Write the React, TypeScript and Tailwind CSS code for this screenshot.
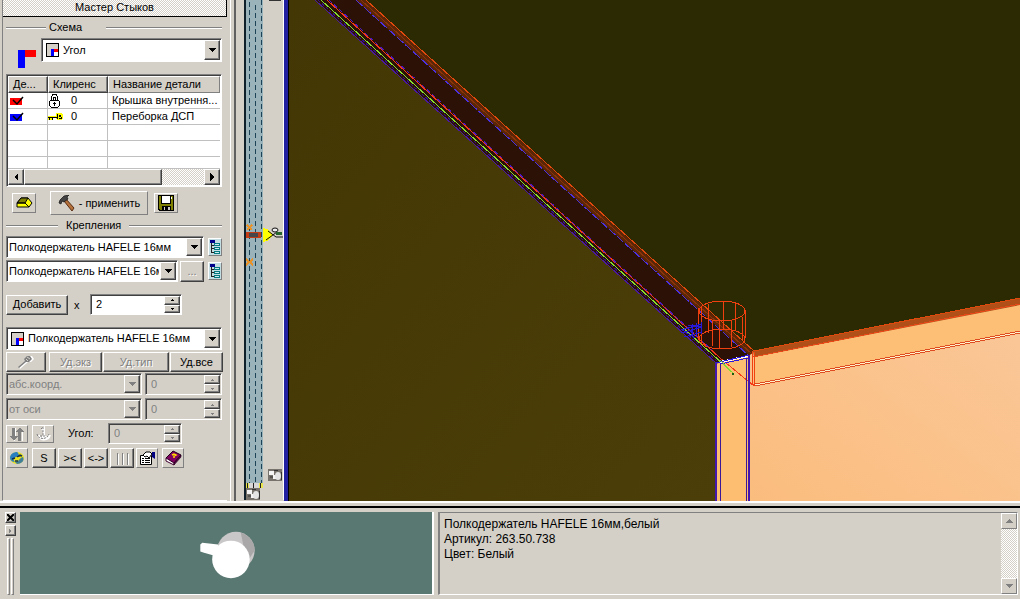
import { useState } from "react"
import type { ReactNode } from "react"
import clsx from "clsx"

const RAISED =
  "border border-t-white border-l-white border-r-[#404040] border-b-[#404040] shadow-[inset_-1px_-1px_#808080]"
const FLAT =
  "border border-t-white border-l-white border-r-[#808080] border-b-[#808080]"
const SUNKEN =
  "border border-t-[#808080] border-l-[#808080] border-r-white border-b-white shadow-[inset_1px_1px_#404040]"
const DITHER =
  "bg-[repeating-conic-gradient(#ffffff_0_25%,#d4d0c8_0_50%)] bg-[length:2px_2px]"

type ButtonProps = {
  label?: string
  children?: ReactNode
  className?: string
  flat?: boolean
  disabled?: boolean
}

function Button({ label, children, className, flat, disabled }: ButtonProps) {
  return (
    <button
      type="button"
      aria-label={label}
      disabled={disabled}
      className={clsx(
        "flex shrink-0 items-center justify-center bg-[#d4d0c8]",
        flat ? FLAT : RAISED,
        disabled && "text-[#808080] [text-shadow:1px_1px_#fff]",
        className
      )}
    >
      {children}
    </button>
  )
}

function Triangle({ dir, small, muted }: { dir: "up" | "down" | "left" | "right"; small?: boolean; muted?: boolean }) {
  const points = {
    up: "0,6 4,2 8,6",
    down: "0,2 8,2 4,6",
    left: "6,0 6,8 2,4",
    right: "2,0 2,8 6,4",
  }
  return (
    <svg
      viewBox="0 0 8 8"
      className={clsx("shrink-0", small ? "size-1" : "size-2", muted ? "fill-[#808080]" : "fill-black")}
      shapeRendering="crispEdges"
      aria-hidden="true"
    >
      <polygon points={points[dir]} />
    </svg>
  )
}

type ComboProps = {
  label: string
  options: string[]
  className?: string
  icon?: boolean
  disabled?: boolean
}

function Combo({ label, options, className, icon, disabled }: ComboProps) {
  return (
    <div
      className={clsx(
        "relative flex min-w-0 items-center p-0.5",
        SUNKEN,
        disabled ? "bg-[#d4d0c8]" : "bg-white",
        className
      )}
    >
      {icon && (
        <span className="ml-0.5 flex shrink-0">
          <CornerIcon />
        </span>
      )}
      <select
        aria-label={label}
        disabled={disabled}
        className={clsx(
          "mr-4 h-full w-0 min-w-0 flex-1 appearance-none overflow-hidden bg-transparent text-clip outline-none",
          icon ? "pl-1" : "pl-0",
          disabled && "text-[#808080]"
        )}
      >
        {options.map((option) => (
          <option key={option}>{option}</option>
        ))}
      </select>
      <span
        className={clsx(
          "pointer-events-none absolute inset-y-px right-px flex w-4 items-center justify-center bg-[#d4d0c8]",
          RAISED
        )}
      >
        <Triangle dir="down" muted={disabled} />
      </span>
    </div>
  )
}

type SpinnerProps = {
  label: string
  initial: number
  className?: string
  disabled?: boolean
}

function Spinner({ label, initial, className, disabled }: SpinnerProps) {
  const [value, setValue] = useState(initial)

  return (
    <div
      className={clsx("flex min-w-0 p-px", SUNKEN, disabled ? "bg-[#d4d0c8]" : "bg-white", className)}
    >
      <input
        type="text"
        aria-label={label}
        value={value}
        disabled={disabled}
        onChange={(event) => setValue(Number(event.target.value) || 0)}
        className={clsx("w-0 min-w-0 flex-1 bg-transparent pl-1 outline-none", disabled && "text-[#808080]")}
      />
      <span className="flex w-4 shrink-0 flex-col">
        <button
          type="button"
          aria-label={`${label}: больше`}
          disabled={disabled}
          onClick={() => setValue(value + 1)}
          className={clsx("flex flex-1 items-center justify-center bg-[#d4d0c8]", RAISED)}
        >
          <Triangle dir="up" small muted={disabled} />
        </button>
        <button
          type="button"
          aria-label={`${label}: меньше`}
          disabled={disabled}
          onClick={() => setValue(value - 1)}
          className={clsx("flex flex-1 items-center justify-center bg-[#d4d0c8]", RAISED)}
        >
          <Triangle dir="down" small muted={disabled} />
        </button>
      </span>
    </div>
  )
}

function Legend({ children, before, text }: { children: ReactNode; before: string; text: string }) {
  return (
    <h2 className="flex items-center">
      <span className={clsx("h-0.5 border-t border-t-[#808080] bg-white", before)} />
      <span className={text}>{children}</span>
      <span className="h-0.5 flex-1 border-t border-t-[#808080] bg-white" />
    </h2>
  )
}

function CornerIcon() {
  return (
    <svg width="13" height="14" shapeRendering="crispEdges" aria-hidden="true">
      <path d="M0 0h13v14H0z" />
      <path d="M1 1h11v12H1z" fill="#d4d0c8" />
      <path d="M5 6h3v7H5z" fill="#00f" />
      <path d="M8 6h4v3H8z" fill="#f00" />
      <path d="M8 9h4v4H8z" fill="#fff" />
    </svg>
  )
}

function FlagIcon({ color }: { color: string }) {
  return (
    <svg width="14" height="12" aria-hidden="true">
      <rect x="0" y="3" width="12" height="7" fill={color} shapeRendering="crispEdges" />
      <path d="M3 5l4 4l6-7" fill="none" stroke="#000" strokeWidth="1.500" />
    </svg>
  )
}

function LockIcon() {
  return (
    <svg width="13" height="14" shapeRendering="crispEdges" aria-hidden="true">
      <path d="M3.500 6V3L5 .5h3L9.500 3v3" fill="none" stroke="#000" />
      <path d="M5.500 6V3.500h2V6" fill="none" stroke="#000" />
      <path d="M2.500 6.500h8l1 1v4l-2 2h-6l-2-2v-4z" fill="#fff" stroke="#000" />
      <path d="M6 8h1v4H6zM5 9h3v1H5z" />
    </svg>
  )
}

function KeyIcon() {
  return (
    <svg width="15" height="10" shapeRendering="crispEdges" aria-hidden="true">
      <path d="M0 4h8V1h5l2 2v3l-2 2H9L7 6H5v2H0z" fill="#ff0" />
      <path d="M0 5h9v1H0zM1 6h1v2H1zM4 6h1v2H4zM9 2h1v5H9zM11 3h2v2h-2zM13 5h1v2h-3v-1h2z" />
    </svg>
  )
}

function EraserIcon() {
  return (
    <svg width="17" height="12" stroke="#000" aria-hidden="true">
      <path d="M1 6L5 1h7l4 5-3 4H1z" fill="#ff0" />
      <path d="M1 6L5 1h7L9 6z" fill="#808000" />
      <path d="M9 6l4 4M9 6H1" fill="none" />
    </svg>
  )
}

function HammerIcon() {
  return (
    <svg width="17" height="17" aria-hidden="true">
      <path d="M6 6l2-2 8 9-2 3z" fill="#b5713c" stroke="#5a2d12" />
      <path d="M1 8l1-3 4-4 5-1-2 2 1 2-4 3-2-1-1 3z" fill="#444" stroke="#111" strokeWidth=".7" />
    </svg>
  )
}

function SaveIcon() {
  return (
    <svg width="16" height="16" shapeRendering="crispEdges" aria-hidden="true">
      <path d="M0 0h16v16H1l-1-1z" />
      <path d="M1 1h14v14H2l-1-1z" fill="#808000" />
      <path d="M3 0h10v9H3z" />
      <path d="M4 1h8v7H4z" fill="#fff" />
      <path d="M4 11h9v5H4z" />
      <path d="M10 12h2v3h-2zM6 12h1v3H6z" fill="#d4d0c8" />
      <path d="M13 2h1v2h-1z" fill="#fff" />
    </svg>
  )
}

function TreeIcon() {
  return (
    <svg width="12" height="16" className="shrink-0" shapeRendering="crispEdges" aria-hidden="true">
      <rect width="12" height="16" fill="#c4dde2" />
      <path d="M1 1h5v3H1z" fill="#00008b" />
      <path d="M2 4h1v10H2zM3 6h2v1H3zM3 9h2v1H3zM3 13h2v1H3z" fill="#222" />
      <path d="M5 4h6v3H5zM5 8h6v3H5zM5 12h6v3H5z" fill="#067a80" />
      <path d="M6 5h4v1H6zM6 9h4v1H6zM6 13h4v1H6z" fill="#cdeaf0" />
    </svg>
  )
}

function ScrewIcon() {
  return (
    <svg width="16" height="14" aria-hidden="true">
      <path d="M1 12l1 2 8-7 3 0 3-3-2-3-4 0-2 3 0 2z" fill="#fff" />
      <path d="M0 12l1 1 7-6 3 0 3-3-2-3-3 0-3 3 1 2z" fill="#808080" />
      <path d="M9 2l3 2M8 4l2 2" stroke="#d4d0c8" />
    </svg>
  )
}

function SwapIcon() {
  return (
    <svg width="17" height="16" shapeRendering="crispEdges" aria-hidden="true">
      <path d="M6 2v8h2l-3 5M13 6v9" stroke="#fff" fill="none" />
      <path d="M3 2h3v8h3l-4 5-4-5h2zM9 15V6H7l4-5 4 5h-3v9z" fill="#808080" />
    </svg>
  )
}

function AnchorIcon() {
  return (
    <svg width="15" height="15" fill="none" aria-hidden="true">
      <g stroke="#fff" transform="translate(1 1)">
        <path d="M5 3l2-2v9M2 8c1 6 9 6 11 0M5 10h5" strokeWidth="2" />
      </g>
      <path d="M5 3l2-2v9M1 8c1 6 10 6 12 0M4 10h6" stroke="#808080" strokeDasharray="2 1" />
    </svg>
  )
}

function BallIcon() {
  return (
    <svg width="16" height="15" aria-hidden="true">
      <ellipse cx="8" cy="7" rx="7" ry="6" fill="#e8e020" />
      <path d="M1 7c0-4 4-6 7-6 3 2 2 5-1 5-3 1-3 3-1 5-3 0-5-2-5-4z" fill="#2a7fc0" />
      <path d="M6 11c4 0 4-4 8-5 2 4-2 7-6 7z" fill="#3f7f9a" />
      <path d="M3 8l3-1M8 6l3-2 2 1M6 10h3" stroke="#15304a" strokeWidth="1.500" />
    </svg>
  )
}

function PropertiesIcon() {
  return (
    <svg width="17" height="15" aria-hidden="true">
      <path d="M1.500 4.500h11v9h-11z" fill="#fff" stroke="#000" />
      <path d="M3 7.500h2M6 7.500h5M3 9.500h2M6 9.500h5M3 11.500h2M6 11.500h5" stroke="#000" />
      <path d="M4 4l3-3h4l2 2-3 4-2-2-2 1z" fill="#fff" stroke="#000" />
      <path d="M13 1h3v7l-3-2z" fill="#000080" />
    </svg>
  )
}

function BookIcon() {
  return (
    <svg width="17" height="16" aria-hidden="true">
      <path d="M1 8l7-7 8 4-7 8z" fill="#800060" stroke="#200018" />
      <path d="M1 8v3l8 4v-2z" fill="#fff" stroke="#400030" />
      <path d="M9 13v2l7-8V5z" fill="#5a0048" stroke="#200018" strokeWidth=".6" />
      <path d="M7 5l2-1 2 1-2 1v2" fill="none" stroke="#ffd800" strokeWidth="1.500" />
    </svg>
  )
}

function BarsIcon() {
  return (
    <svg width="15" height="13" shapeRendering="crispEdges" aria-hidden="true">
      <path d="M2 1h1v12H2zM7 1h1v12H7zM12 1h1v12h-1z" fill="#808080" />
      <path d="M3 2h1v11H3zM8 2h1v11H8zM13 2h1v11h-1z" fill="#fff" />
    </svg>
  )
}

const details = [
  { color: "#f00", icon: <LockIcon />, clearance: 0, name: "Крышка внутрення..." },
  { color: "#00f", icon: <KeyIcon />, clearance: 0, name: "Переборка ДСП" },
]

function DetailsTable() {
  const head = "h-[17px] truncate bg-[#d4d0c8] px-1 text-left font-normal"
  const cell = "h-4 border-r border-b border-[#c0c0c0] p-0"

  return (
    <div className={clsx("mt-3 bg-white p-px", SUNKEN)}>
      <table className="w-full table-fixed border-separate border-spacing-0">
        <colgroup>
          <col className="w-10" />
          <col className="w-[60px]" />
          <col />
        </colgroup>
        <thead>
          <tr>
            <th className={clsx(head, RAISED)}>Де...</th>
            <th className={clsx(head, RAISED)}>Клиренс</th>
            <th className={clsx(head, FLAT)}>Название детали</th>
          </tr>
        </thead>
        <tbody>
          {details.map((row) => (
            <tr key={row.name}>
              <td className={cell}>
                <span className="flex pl-0.5">
                  <FlagIcon color={row.color} />
                </span>
              </td>
              <td className={cell}>
                <span className="flex h-[15px] items-center gap-2">
                  <span className="w-[15px]">{row.icon}</span>
                  {row.clearance}
                </span>
              </td>
              <td className="h-4 overflow-hidden border-b border-[#c0c0c0] py-0 pr-0 pl-1 leading-[15px] whitespace-nowrap">
                {row.name}
              </td>
            </tr>
          ))}
          {["h-4", "h-4", "h-3"].map((height, index) => (
            <tr key={index} className={height}>
              <td className="border-r border-b border-[#c0c0c0] p-0" />
              <td className="border-r border-b border-[#c0c0c0] p-0" />
              <td className="border-b border-[#c0c0c0] p-0" />
            </tr>
          ))}
        </tbody>
      </table>
      <div className={clsx("flex h-4", DITHER)}>
        <Button label="Прокрутить влево" className="w-4">
          <Triangle dir="left" />
        </Button>
        <div className={clsx("w-[138px] bg-[#d4d0c8]", RAISED)} />
        <div className="flex-1" />
        <Button label="Прокрутить вправо" className="w-4">
          <Triangle dir="right" />
        </Button>
      </div>
    </div>
  )
}

const SHELF_HOLDER = "Полкодержатель HAFELE 16мм"

function JointPanel() {
  return (
    <aside className="flex w-[236px] shrink-0 border-r-2 border-r-[#606060] pr-[3px]">
      <div className="ml-0.5 flex min-w-0 flex-1 flex-col border-b border-l border-b-white border-l-[#808080]">
        <h1
          className={clsx("h-[17px] shrink-0 border-r border-b border-black text-center leading-[15px]", DITHER)}
        >
          Мастер Стыков
        </h1>
        <div className="flex flex-1 flex-col pr-[5px] pl-[3px]">
          <div className="mt-1">
            <Legend before="w-10" text="pr-6 pl-[3px]">
              Схема
            </Legend>
          </div>
          <div className="mt-1 flex items-start">
            <svg width="18" height="18" className="mt-3 ml-3 shrink-0" shapeRendering="crispEdges" aria-hidden="true">
              <path d="M0 0h7v18H0z" fill="#00f" />
              <path d="M7 0h11v7H7z" fill="#f00" />
            </svg>
            <Combo label="Схема" options={["Угол"]} icon className="ml-[5px] h-6 flex-1" />
          </div>

          {/* the icon hangs below the combo, so the table follows it closely */}
          <div className="-mt-1.5">
            <DetailsTable />
          </div>

          <div className="mt-1 flex items-center pl-1.5">
            <Button label="Очистить" flat className="h-5 w-6">
              <EraserIcon />
            </Button>
            <Button flat className="ml-3.5 h-6 w-[98px] gap-1">
              <HammerIcon />- применить
            </Button>
            <Button label="Сохранить" flat className="ml-1.5 h-5 w-6">
              <SaveIcon />
            </Button>
          </div>

          <div className="mt-1">
            <Legend before="w-[52px]" text="px-2">
              Крепления
            </Legend>
          </div>

          <div className="mt-1 flex items-center gap-1">
            <Combo label="Крепление 1" options={[SHELF_HOLDER]} className="h-[22px] flex-1" />
            <Button label="Каталог 1" flat className="h-[18px] w-3.5">
              <TreeIcon />
            </Button>
          </div>
          <div className="mt-0.5 flex items-center gap-0.5">
            <Combo label="Крепление 2" options={[SHELF_HOLDER]} className="h-[22px] flex-1" />
            <Button label="Обзор" className="h-[21px] w-6" disabled>
              ...
            </Button>
            <Button label="Каталог 2" flat className="ml-0.5 h-[18px] w-3.5">
              <TreeIcon />
            </Button>
          </div>

          <div className="mt-3 flex items-center">
            <Button className="h-5 w-[62px]">Добавить</Button>
            <span className="w-[22px] pl-1.5 leading-4">x</span>
            <Spinner label="Количество" initial={2} className="h-[21px] w-[92px]" />
          </div>

          <Combo label="Установленное крепление" options={[SHELF_HOLDER]} icon className="mt-3 h-[23px]" />

          <div className="mt-0.5 flex gap-px">
            <Button label="Винт" className="mr-0.5 h-5 w-10" disabled>
              <ScrewIcon />
            </Button>
            <Button className="h-5 w-[53px]" disabled>
              Уд.экз
            </Button>
            <Button className="h-5 w-[66px]" disabled>
              Уд.тип
            </Button>
            <Button className="h-5 w-[53px]">Уд.все</Button>
          </div>

          <div className="mt-px flex gap-[3px]">
            <Combo label="Система координат" options={["абс.коорд."]} disabled className="h-[22px] w-[136px]" />
            <Spinner label="Координата" initial={0} disabled className="h-[22px] flex-1" />
          </div>
          <div className="mt-[3px] flex gap-[3px]">
            <Combo label="Отсчёт" options={["от оси"]} disabled className="h-[22px] w-[136px]" />
            <Spinner label="Отступ" initial={0} disabled className="h-[22px] flex-1" />
          </div>

          <div className="mt-[3px] flex items-center">
            <Button label="Поменять местами" flat disabled className="h-[18px] w-[22px]">
              <SwapIcon />
            </Button>
            <Button label="Привязка" flat disabled className="ml-1 h-[18px] w-[22px]">
              <AnchorIcon />
            </Button>
            <span className="ml-3.5 w-10">Угол:</span>
            <Spinner label="Угол" initial={0} disabled className="h-[21px] w-[74px]" />
          </div>

          <div className="mt-1 flex gap-0.5">
            <Button label="Вид" flat className="mr-0.5 h-5 w-[22px]">
              <BallIcon />
            </Button>
            <Button className="h-5 w-6">S</Button>
            <Button className="h-5 w-6">&gt;&lt;</Button>
            <Button className="h-5 w-6">&lt;-&gt;</Button>
            <Button label="Разделить" className="h-5 w-6" disabled>
              <BarsIcon />
            </Button>
            <Button label="Свойства" flat className="h-5 w-[22px]">
              <PropertiesIcon />
            </Button>
            <Button label="Справка" flat className="ml-0.5 h-5 w-[22px]">
              <BookIcon />
            </Button>
          </div>
        </div>
      </div>
      <div className="ml-[3px] w-px bg-white" />
    </aside>
  )
}

function StonesIcon({ x, y }: { x: number; y: number }) {
  return (
    <g transform={`translate(${x} ${y})`} shapeRendering="auto">
      <rect width="14" height="12" fill="#77736c" />
      <path d="M1 2h5v4H1zM5 6h4v4H5z" fill="#f4f4f4" />
      <ellipse cx="10" cy="7" rx="3" ry="4" fill="#e4e4e4" />
      <path d="M2 8h3M13.500 3v8M6 1.500h4" stroke="#333" />
    </g>
  )
}

function Ruler() {
  return (
    <svg className="h-full w-12 shrink-0" shapeRendering="crispEdges" aria-hidden="true">
      <rect x="8" width="19" height="485" fill="#9ab2ba" />
      <rect x="8" width="2" height="500" fill="#10202a" />
      <g stroke="#1d4356" strokeDasharray="5 3">
        <path d="M13.500 2V485M19.500 5V485M25.500 0V485" />
      </g>
      <path d="M33 0h12" stroke="#333" strokeWidth="2" />
      <path d="M47 0h1v500h-1z" fill="#fff" />

      <path d="M11 225l5 5M16 225l-5 5M10 259l7 6M17 259l-7 6" stroke="#e8922a" strokeWidth="2" />
      <path d="M10 232h15v6H10z" fill="#c43a12" />
      <path d="M13 233h9v4h-9z" fill="#45454a" />
      <path d="M27 228l6 2 4 5-4 5-6 2z" fill="#ff0" />
      <g shapeRendering="auto">
        <path d="M30 240l11-8M32 231l8 6h7" fill="none" stroke="#111" />
        <ellipse cx="39" cy="230" rx="3" ry="2" fill="#eee" stroke="#111" />
        <path d="M40 232h6v3h-6z" fill="#26652e" />
      </g>

      <path d="M10 483h17v5H10z" fill="#e8e44c" />
      <path d="M13 483h10v5H13z" fill="#d8d8d8" />
      <path d="M11 483v5M17 483v5M24 483v5" stroke="#222" />
      <StonesIcon x={10} y={488} />
      <StonesIcon x={32} y={469} />
    </svg>
  )
}

function Viewport() {
  return (
    <svg
      viewBox="289 0 731 501"
      preserveAspectRatio="xMinYMin slice"
      className="h-full min-w-0 flex-1 border-l border-black bg-[#2b2a02]"
      role="img"
      aria-label="Трёхмерный вид стыка"
    >
      <defs>
        <linearGradient id="side" x1="0" y1="0" x2="1" y2="1">
          <stop offset="0" stopColor="#433705" />
          <stop offset="1" stopColor="#4b3e08" />
        </linearGradient>
        <linearGradient id="face" x1="0" y1="1" x2="1" y2="0">
          <stop offset="0" stopColor="#fbbd7e" />
          <stop offset="1" stopColor="#fac799" />
        </linearGradient>
      </defs>

      <path d="M288 0H316L716 363V501H288z" fill="url(#side)" />
      <path d="M316 0H356L750 356L716 363z" fill="#2c1206" />
      <path d="M356 0H366L754 352L750 356z" fill="#5a2607" />

      <path d="M753 352L1020 298V501H749V356z" fill="url(#face)" />
      <path d="M754 356L1020 304V333L755 384z" fill="#fdbf76" />
      <path d="M753 351L1020 298V305L754 357z" fill="#b04f18" />
      <path d="M715 364L748 355V501H715z" fill="#fdbe72" />

      <g fill="none" strokeWidth="1" shapeRendering="crispEdges">
        <path d="M315 0L716 363" stroke="#4a1a9c" />
        <path d="M318 0L717 361" stroke="#33108c" strokeDasharray="3 2" />
        <path d="M321 0L734 374" stroke="#84dc30" />
        <path d="M327 0L720 358L754 386" stroke="#f43818" />
        <path d="M329 0L712 350" stroke="#4a1ac0" strokeDasharray="4 3" />
        <path d="M356 0L748 355" stroke="#4a30e0" strokeDasharray="9 2" />
        <path d="M361 0L752 354" stroke="#8c3408" />
        <path d="M366 0L754 351L1020 298" stroke="#e0480c" />
        <path d="M752 351V383L755 386M754 352V386" stroke="#f04010" />
        <path d="M753 357L1020 304" stroke="#e84818" />
        <path d="M755 385L1020 332" stroke="#fff0c8" />
        <path d="M755 384L1020 331M755 386L1020 333" stroke="#e04a20" />

        <g stroke="#f04010">
          <ellipse cx="722" cy="311" rx="23" ry="10" />
          <ellipse cx="722" cy="339" rx="23" ry="10" />
          <path d="M698.500 308V340M701.500 306V343M708.500 304V333M712.500 320V346M723.500 302V330M719.500 321V349M735.500 303V331M731.500 320V347M742.500 317V341M745.500 310V338" />
        </g>

        <g stroke="#2818d8">
          <path d="M681 330l21-6M681 333l21-6M684 337l18-5M688 325l14 2M681 329l14 9M687 327l8 9M692 324v12M696 323v12M701 322v12" />
        </g>

        <path d="M720 362L748 356" stroke="#fff" strokeWidth="2" />
        <path d="M716 363L749 355M720 364L748 358" stroke="#2c14e0" />
        <path d="M715.500 363V501M748.500 355V501" stroke="#4416b0" strokeWidth="2" />
        <path d="M720.500 363V501M746.500 358V501" stroke="#3a1898" />
        <path d="M720 360L734 374" stroke="#84dc30" />
        <path d="M733 373v2" stroke="#1a5c10" strokeWidth="2" />
      </g>
    </svg>
  )
}

function InfoBar() {
  return (
    <footer className="border-t-2 border-black bg-[#d4d0c8]">
      <div className="flex h-[91px] gap-1 pt-1 pr-0.5 pb-1">
        <div className="ml-1 flex w-3 shrink-0 flex-col items-center gap-0.5">
          <Button label="Закрыть" className="h-[11px] w-[11px]">
            <svg width="7" height="7" stroke="#000" strokeWidth="2" aria-hidden="true">
              <path d="M0 0l7 7M7 0L0 7" />
            </svg>
          </Button>
          <Button label="Развернуть" className="h-[11px] w-[11px]">
            <Triangle dir="right" small muted />
          </Button>
          <div className="flex flex-1 gap-px">
            <span className={clsx("w-[3px]", FLAT)} />
            <span className={clsx("w-[3px]", FLAT)} />
          </div>
        </div>
        <div className="w-[414px] shrink-0 border-r-2 border-b border-white bg-[#5a7872]">
          <svg viewBox="0 0 412 83" className="h-full w-full" role="img" aria-label="Полкодержатель">
            <circle cx="216" cy="39" r="19" fill="#c9c7c7" />
            <path d="M221 21a19 19 0 0 1 14 18l-8 12z" fill="#a9a7a8" />
            <path d="M180 33l2-2 16 2-1 12-14-4-3-1z" fill="#fff" />
            <circle cx="211" cy="48" r="19" fill="#fff" />
          </svg>
        </div>
        <div className="flex min-w-0 flex-1 border-t border-r border-b border-l-2 border-t-[#808080] border-r-white border-b-white border-l-[#808080]">
          <div className="min-w-0 flex-1 pt-1 pl-1 text-[12px] leading-[15px]">
            <p>Полкодержатель HAFELE 16мм,белый</p>
            <p>Артикул: 263.50.738</p>
            <p>Цвет: Белый</p>
          </div>
          <div className={clsx("flex w-4 flex-col justify-between", DITHER)}>
            <Button label="Прокрутить вверх" flat className="h-4 w-4">
              <Triangle dir="up" muted />
            </Button>
            <Button label="Прокрутить вниз" flat className="h-4 w-4">
              <Triangle dir="down" muted />
            </Button>
          </div>
        </div>
      </div>
    </footer>
  )
}

export default function App() {
  return (
    <main className="flex h-screen flex-col overflow-hidden bg-[#d4d0c8] font-['Liberation_Sans',Arial,sans-serif] text-[11px] leading-[13px] text-black">
      <div className="flex min-h-0 flex-1">
        <JointPanel />
        <Ruler />
        <div className="flex min-w-0 flex-1 border-l-4 border-l-[#2020a0]">
          <Viewport />
        </div>
      </div>
      <div className="h-[5px] border-t-2 border-white" />
      <InfoBar />
    </main>
  )
}
